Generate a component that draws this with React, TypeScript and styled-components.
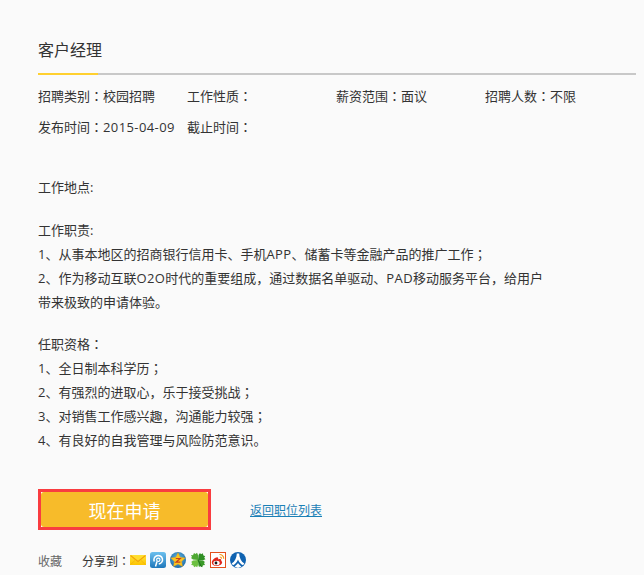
import React from "react";
import styled, { createGlobalStyle } from "styled-components";

const Global = createGlobalStyle`
  html, body { margin: 0; padding: 0; background: #fafafa; }
  body { font-family: "Open Sans", "Noto Sans CJK SC", "Liberation Sans", sans-serif; color: #333; }
`;

const Page = styled.div`
  width: 644px;
  height: 575px;
  overflow: hidden;
  padding: 38px 8px 0 38px;
  box-sizing: border-box;
`;

const Header = styled.div`
  height: 35px;
  border-bottom: 2px solid #c8c8c8;
  position: relative;
`;

const Title = styled.h1`
  margin: 0;
  font-size: 16px;
  font-weight: 400;
  line-height: 24px;
  color: #333;
`;

const Accent = styled.span`
  position: absolute;
  left: 0;
  bottom: -2px;
  width: 60px;
  height: 2px;
  background: #ffd02f;
`;

const MetaGrid = styled.div`
  display: grid;
  grid-template-columns: repeat(4, 149px);
  margin-top: 9px;
  row-gap: 7px;
`;

const MetaItem = styled.div`
  font-size: 13px;
  line-height: 24px;
  white-space: nowrap;
`;

const Mid = styled.span`
  font-family: "Noto Sans CJK TC", sans-serif;
`;

const Latin = styled.span`
  letter-spacing: 0.4px;
`;

const Block = styled.div<{ $top: number }>`
  margin-top: ${(p) => p.$top}px;
  font-size: 13px;
  line-height: 24px;
`;

const Line = styled.div`
  white-space: nowrap;
`;

const Actions = styled.div`
  display: flex;
  align-items: center;
  gap: 39px;
  margin-top: 37px;
`;

const ApplyFrame = styled.div`
  width: 173px;
  height: 41px;
  box-sizing: border-box;
  border: 3px solid #f93c40;
  background: #fff;
`;

const ApplyButton = styled.button`
  width: 100%;
  height: 100%;
  display: block;
  border: 0;
  border-radius: 3px;
  background: #f7bb2a;
  color: #fff;
  font-family: inherit;
  font-size: 18px;
  padding: 0;
`;

const BackLink = styled.a`
  font-size: 12px;
  color: #1a80b6;
  text-decoration: underline;
`;

const ShareRow = styled.div`
  display: flex;
  align-items: center;
  margin-top: 21px;
  font-size: 12px;
  line-height: 20px;
  white-space: nowrap;
`;

const Collect = styled.span`
  color: #666;
  width: 44px;
`;

const ShareLabel = styled.span`
  color: #333;
  width: 48px;
`;

const Icons = styled.div`
  display: flex;
  gap: 4px;
  align-items: center;
  margin-top: -4px;
`;

const Ico = styled.svg`
  width: 16px;
  height: 16px;
  display: block;
  flex: none;
`;

const Mail = () => (
  <Ico viewBox="0 0 16 16">
    <defs>
      <linearGradient id="mailG" x1="0" y1="0" x2="0" y2="1">
        <stop offset="0" stopColor="#ffe23a" />
        <stop offset="1" stopColor="#fdc400" />
      </linearGradient>
    </defs>
    <rect y="3" width="16" height="10" fill="url(#mailG)" />
    <path d="M.5 3.500l7.500 6 7.500-6" fill="#ffdd2e" stroke="#f2a20a" strokeWidth="1.100" />
    <path d="M.5 12.500l4.500-4M15.500 12.500l-4.500-4" stroke="#f4b40a" strokeWidth=".8" fill="none" />
  </Ico>
);

const Pp = () => (
  <Ico viewBox="0 0 16 16">
    <defs>
      <linearGradient id="ppG" x1="0" y1="0" x2="0" y2="1">
        <stop offset="0" stopColor="#6cc0ee" />
        <stop offset="1" stopColor="#1f78bb" />
      </linearGradient>
    </defs>
    <rect width="16" height="16" rx="2.500" fill="url(#ppG)" />
    <path d="M5.500 14.500L7 9.500M4.300 9.500A4.300 4.300 0 1 1 8.800 12" fill="none" stroke="#fff" strokeWidth="1.500" />
    <circle cx="8.300" cy="7.800" r="1.700" fill="none" stroke="#fff" strokeWidth="1.100" />
  </Ico>
);

const Qz = () => (
  <Ico viewBox="0 0 16 16">
    <defs>
      <radialGradient id="qzG" cx=".5" cy=".4" r=".6">
        <stop offset="0" stopColor="#6cc0e8" />
        <stop offset="1" stopColor="#1c6aa8" />
      </radialGradient>
    </defs>
    <circle cx="8" cy="8" r="8" fill="url(#qzG)" />
    <path d="M8 .8l2.200 4.500 5 .7-3.600 3.500.9 5L8 12.100l-4.500 2.400.9-5L.8 6l5-.7z" fill="#fbc51f" stroke="#e89a10" strokeWidth=".4" />
    <path d="M5.800 6.500h4.400L6 10.200h4.400" fill="none" stroke="#c9401a" strokeWidth="1.200" />
  </Ico>
);

const Clover = () => (
  <Ico viewBox="0 0 16 16">
    <path d="M8 8L3 7.500 1 6l1-1-1-2 2 .2L4 1l1.500 1L7 .8 8 3z" fill="#4ea832" />
    <path d="M8 8l.5-5L10 1l1 1.200 2-1 .2 2 2 1-1 1.500 1.300 1.500-2.500 1z" fill="#2f8f24" />
    <path d="M8 8l-5 .5L1.200 10l1 1-1 2 2 .2 1 2 1.500-1 1.500 1 .8-2.200z" fill="#6cc040" />
    <path d="M8 8l5 .5 2 1.500-1 1 1 2-2 .2-.8 2L10.500 14 9 15l-.7-2z" fill="#3a9a28" />
    <path d="M8 8l3.500 7" stroke="#1f6e18" strokeWidth="1" />
  </Ico>
);

const Weibo = () => (
  <Ico viewBox="0 0 16 16">
    <rect x=".5" y=".5" width="15" height="15" fill="#fff" stroke="#e4501c" />
    <path d="M1.800 10.500c0-2.500 3.500-5.300 5.300-5.300 1.300 0 1.300 1.200 1 2.200 1.500-.6 3.200-.5 3.200 1 0 .3 0 .5-.2.700 1 .4 1 1 1 1.400 0 1.800-2.800 3.500-5.600 3.500S1.800 12.700 1.800 10.500z" fill="#e0261c" />
    <ellipse cx="6.500" cy="11" rx="3.200" ry="2.300" fill="#fff" />
    <circle cx="6" cy="11" r="1.400" fill="#1a1a1a" />
    <path d="M9.500 2.500a4 4 0 0 1 4.200 4.200M9.800 5a1.800 1.800 0 0 1 1.800 1.800" fill="none" stroke="#f49a1c" strokeWidth="1.200" />
  </Ico>
);

const Ren = () => (
  <Ico viewBox="0 0 16 16">
    <circle cx="8" cy="8" r="8" fill="#0f62b0" />
    <path d="M6.800 1.500h2.400C9.300 5.500 11 9.500 14.300 11.500L13 13.300C10.500 12 8.800 9.700 8 7.500 7.200 9.700 5.500 12 3 13.300L1.700 11.500C5 9.500 6.700 5.500 6.800 1.500z" fill="#fff" />
    <path d="M4.500 14.500C6 13.500 7.300 12.200 8 11c.7 1.200 2 2.500 3.500 3.500L8 16z" fill="#fff" />
  </Ico>
);

export default function App() {
  return (
    <Page>
      <Global />
      <Header>
        <Title>客户经理</Title>
        <Accent />
      </Header>
      <MetaGrid>
        <MetaItem>招聘类别<Mid>：</Mid>校园招聘</MetaItem>
        <MetaItem>工作性质<Mid>：</Mid></MetaItem>
        <MetaItem>薪资范围<Mid>：</Mid>面议</MetaItem>
        <MetaItem>招聘人数<Mid>：</Mid>不限</MetaItem>
        <MetaItem>发布时间<Mid>：</Mid><Latin>2015-04-09</Latin></MetaItem>
        <MetaItem>截止时间<Mid>：</Mid></MetaItem>
      </MetaGrid>
      <Block $top={36}>
        <Line>工作地点:</Line>
      </Block>
      <Block $top={19}>
        <Line>工作职责:</Line>
        <Line>1、从事本地区的招商银行信用卡、手机<Latin>APP</Latin>、储蓄卡等金融产品的推广工作<Mid>；</Mid></Line>
        <Line>2、作为移动互联<Latin>O2O</Latin>时代的重要组成，通过数据名单驱动、<Latin>PAD</Latin>移动服务平台，给用户</Line>
        <Line>带来极致的申请体验。</Line>
      </Block>
      <Block $top={18}>
        <Line>任职资格<Mid>：</Mid></Line>
        <Line>1、全日制本科学历<Mid>；</Mid></Line>
        <Line>2、有强烈的进取心，乐于接受挑战<Mid>；</Mid></Line>
        <Line>3、对销售工作感兴趣，沟通能力较强<Mid>；</Mid></Line>
        <Line>4、有良好的自我管理与风险防范意识。</Line>
      </Block>
      <Actions>
        <ApplyFrame><ApplyButton>现在申请</ApplyButton></ApplyFrame>
        <BackLink>返回职位列表</BackLink>
      </Actions>
      <ShareRow>
        <Collect>收藏</Collect>
        <ShareLabel>分享到<Mid>：</Mid></ShareLabel>
        <Icons>
          <Mail /><Pp /><Qz /><Clover /><Weibo /><Ren />
        </Icons>
      </ShareRow>
    </Page>
  );
}
